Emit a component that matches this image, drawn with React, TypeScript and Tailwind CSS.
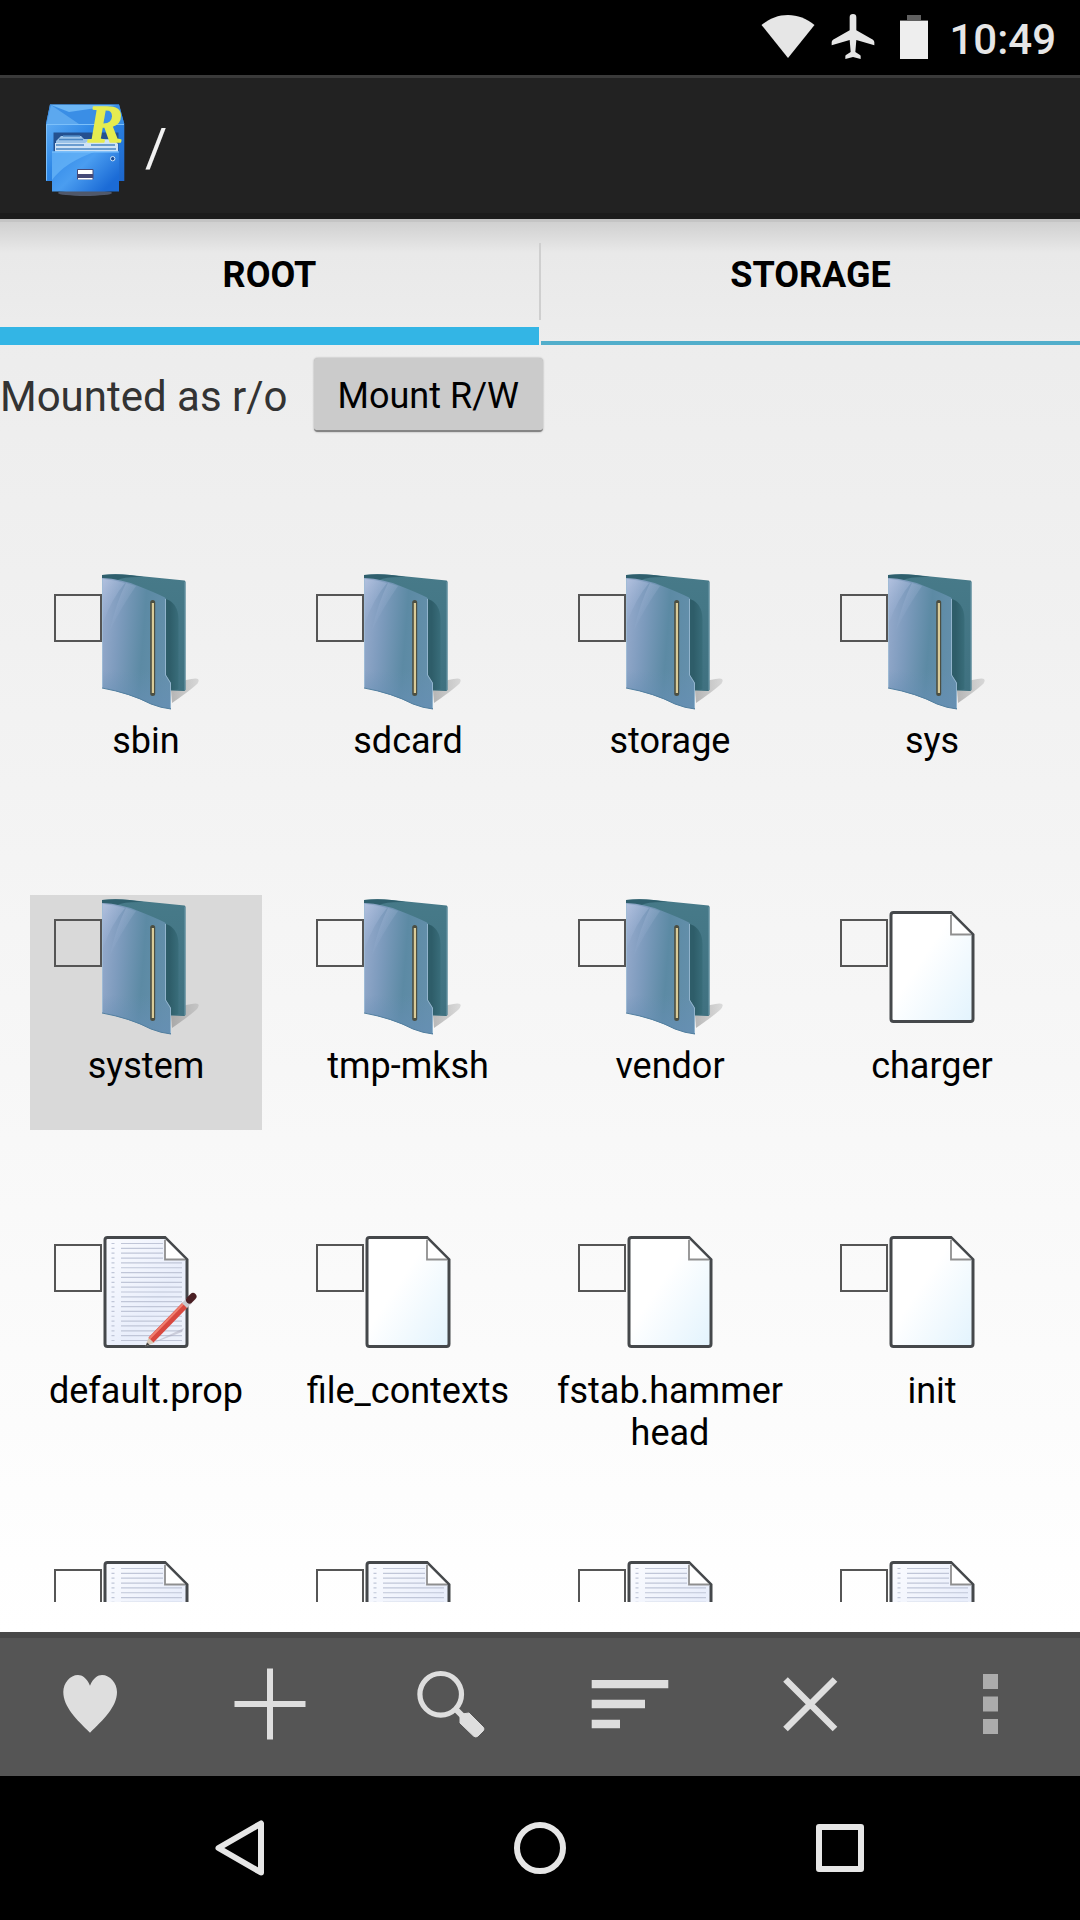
import { useState } from 'react';
import type { ReactNode } from 'react';
import { clsx } from 'clsx';

type Kind = 'folder' | 'file' | 'text' | 'editable';

type Entry = {
  id: number;
  kind: Kind;
  name?: string;
};

const entries: Entry[] = [
  { id: 1, kind: 'folder', name: 'sbin' },
  { id: 2, kind: 'folder', name: 'sdcard' },
  { id: 3, kind: 'folder', name: 'storage' },
  { id: 4, kind: 'folder', name: 'sys' },
  { id: 5, kind: 'folder', name: 'system' },
  { id: 6, kind: 'folder', name: 'tmp-mksh' },
  { id: 7, kind: 'folder', name: 'vendor' },
  { id: 8, kind: 'file', name: 'charger' },
  { id: 9, kind: 'editable', name: 'default.prop' },
  { id: 10, kind: 'file', name: 'file_contexts' },
  { id: 11, kind: 'file', name: 'fstab.hammerhead' },
  { id: 12, kind: 'file', name: 'init' },
  { id: 13, kind: 'text' },
  { id: 14, kind: 'text' },
  { id: 15, kind: 'text' },
  { id: 16, kind: 'text' },
];

const ruledLines = Array.from({ length: 21 }, (_, i) => 23.5 + i * 4.85);

export default function App() {
  return (
    <div className="flex h-screen flex-col overflow-hidden bg-black font-[Roboto,sans-serif] text-black">
      <GradientDefs />
      <StatusBar />
      <TitleBar />
      <main className="flex min-h-0 flex-1 flex-col bg-linear-to-b from-[#ebebeb] to-white">
        <Tabs />
        <MountRow />
        <FileGrid />
      </main>
      <Toolbar />
      <NavigationBar />
    </div>
  );
}

function StatusBar() {
  return (
    <header className="flex h-[75px] shrink-0 items-start justify-end pt-3.5 pr-6 text-[#e6e6e6]">
      <svg className="mr-4 h-[46px] w-[54px]" viewBox="0 0 54 46" fill="currentColor">
        <path d="M27 44 0.5 11C16-2.5 38-2.5 53.5 11z" />
      </svg>
      <svg className="mr-6 h-[46px] w-11" viewBox="272 42 132 138" fill="currentColor">
        <path d="M328 52a10 10 0 0 1 20 0v39l50 28q4 3 4 8v9l-54-16-3 36 14 9q2 1 2 4v8l-23-6-23 6v-8q0-3 2-4l14-9-3-36-54 16v-9q0-5 4-8l50-28z" />
      </svg>
      <svg className="mr-5 h-[46px] w-[30px]" viewBox="0 0 30 46">
        <path d="M8 1h14v5h7v2H1V6h7z" fill="#606060" />
        <path d="M1 7h28v38H1z" fill="#eee" />
      </svg>
      <span className="text-[42px] leading-[52px] font-medium">10:49</span>
    </header>
  );
}

function TitleBar() {
  return (
    <div className="flex h-36 shrink-0 items-center gap-3 border-t-3 border-b-6 border-t-[#3a3a3a] border-b-[#1c1c1c] bg-[#222] pt-1 pl-[37px]">
      <CabinetIcon />
      <h1 className="text-[54px] leading-[64px] text-[#f2f2f2]">/</h1>
    </div>
  );
}

function Tabs() {
  const [active, setActive] = useState('ROOT');

  return (
    <div
      role="tablist"
      className="flex h-[126px] shrink-0 border-t-3 border-[#c4c4c4] bg-linear-to-b from-[#d0d0d0] via-[#e9e9e9] via-25% to-[#ededed]"
    >
      <Tab label="ROOT" active={active === 'ROOT'} onSelect={setActive} />
      <div className="mt-[21px] h-[77px] w-0.5 bg-[#cfcfcf]" />
      <Tab label="STORAGE" active={active === 'STORAGE'} onSelect={setActive} />
    </div>
  );
}

function Tab({
  label,
  active,
  onSelect,
}: {
  label: string;
  active: boolean;
  onSelect: (label: string) => void;
}) {
  return (
    <button
      type="button"
      role="tab"
      aria-selected={active}
      onClick={() => onSelect(label)}
      className="flex flex-1 flex-col justify-between pt-8 text-4xl font-bold"
    >
      <span className="w-full text-center leading-[42px]">{label}</span>
      <span className={clsx('w-full', active ? 'h-[18px] bg-[#33b5e5]' : 'h-1 bg-[#52aecb]')} />
    </button>
  );
}

function MountRow() {
  return (
    <div className="flex shrink-0 items-center gap-[26px] pt-[13px]">
      <span className="pt-1 text-[42px] leading-[50px] text-[#333]">Mounted as r/o</span>
      <button
        type="button"
        className="h-[74px] rounded-sm border-b-2 border-[#858585] bg-[#cbcbcb] px-6 pt-1 text-4xl shadow-[0_0_2px_#999]"
      >
        Mount R/W
      </button>
    </div>
  );
}

function FileGrid() {
  return (
    <ul className="mt-[138px] mb-[30px] grid min-h-0 flex-1 auto-rows-[235px] grid-cols-4 gap-x-[30px] gap-y-[90px] overflow-hidden pr-8 pl-[30px]">
      {entries.map((entry) => (
        <FileCell key={entry.id} entry={entry} highlighted={entry.name === 'system'} />
      ))}
    </ul>
  );
}

function FileCell({ entry, highlighted }: { entry: Entry; highlighted: boolean }) {
  const id = `entry-${entry.id}`;

  return (
    <li className={clsx('flex flex-col gap-1.5', highlighted && 'bg-[#d9d9d9]')}>
      <div className="flex items-start pl-6">
        <input
          id={id}
          type="checkbox"
          aria-label={entry.name ?? 'Text file'}
          className="mt-6 size-12 shrink-0 appearance-none border-2 border-[#555] checked:bg-[#33b5e5]"
        />
        {entry.kind === 'folder' ? <FolderIcon /> : <FileIcon kind={entry.kind} />}
      </div>
      {entry.name && (
        <label htmlFor={id} className="text-center text-4xl leading-[42px] break-all">
          {entry.name}
        </label>
      )}
    </li>
  );
}

function Toolbar() {
  return (
    <div className="grid h-36 shrink-0 grid-cols-6 border-t-6 border-[#484848] bg-[#555] text-[#dedede]">
      <ToolButton label="Bookmarks">
        <path
          d="M48 29.7C45 22 40 19 36 19C28 19 21.3 27 21.3 36C21.3 51 35 64 48 76.7C61 64 75 51 75 36C75 27 68 19 60 19C56 19 51 22 48 29.7z"
          fill="currentColor"
        />
      </ToolButton>
      <ToolButton label="Add">
        <path d="M48 12.5v71M12.5 48h71" stroke="currentColor" strokeWidth="6" />
      </ToolButton>
      <ToolButton label="Search">
        <circle cx="38.7" cy="38.3" r="20.8" fill="none" stroke="currentColor" strokeWidth="5.2" />
        <path d="M53 52.5l9 9" stroke="currentColor" strokeWidth="6" />
        <path
          d="M58 60q0-2 2-2l7-1 14 14q2 2 0 4l-5 5q-2 2-4.500 0L58 67z"
          fill="currentColor"
          stroke="currentColor"
        />
      </ToolButton>
      <ToolButton label="Sort">
        <path d="M9.7 24h76.6v8.300H9.7zM9.7 43.8H63v8.400H9.7zM9.7 63.8H38v8.400H9.7z" fill="currentColor" />
      </ToolButton>
      <ToolButton label="Close">
        <path d="M23.5 23.5l49.500 49.500M73 23.5L23.5 73" stroke="currentColor" strokeWidth="6.5" />
      </ToolButton>
      <ToolButton label="More">
        <path d="M41 18h15v15h-15zM41 40.5h15v15h-15zM41 63h15v15h-15z" fill="#acacac" />
      </ToolButton>
    </div>
  );
}

function ToolButton({ label, children }: { label: string; children: ReactNode }) {
  return (
    <button type="button" aria-label={label} className="flex justify-center pt-[18px]">
      <svg className="size-24" viewBox="0 0 96 96">
        {children}
      </svg>
    </button>
  );
}

function NavigationBar() {
  return (
    <nav className="grid h-36 shrink-0 grid-cols-3 px-[90px] text-[#e6e6e6]">
      <NavButton label="Back">
        <path d="M14.5 36 57 11.5v49z" />
      </NavButton>
      <NavButton label="Home">
        <circle cx="36" cy="36" r="23" />
      </NavButton>
      <NavButton label="Recents">
        <path d="M15 15h42v42H15z" />
      </NavButton>
    </nav>
  );
}

function NavButton({ label, children }: { label: string; children: ReactNode }) {
  return (
    <button type="button" aria-label={label} className="flex items-center justify-center">
      <svg
        className="size-[72px]"
        viewBox="0 0 72 72"
        fill="none"
        stroke="currentColor"
        strokeWidth="6"
        strokeLinejoin="round"
      >
        {children}
      </svg>
    </button>
  );
}

// Shared by every icon, so each gradient is defined only once
function GradientDefs() {
  return (
    <svg className="absolute size-0" aria-hidden="true">
      <defs>
        <linearGradient id="folder-front" x1="0" y1="0.35" x2="1" y2="0.5">
          <stop offset="0" stopColor="#94a9cb" />
          <stop offset="0.25" stopColor="#7d9bbd" />
          <stop offset="0.6" stopColor="#5c8aa4" />
          <stop offset="1" stopColor="#6590ac" />
        </linearGradient>
        <linearGradient id="folder-foot" x1="0" y1="0" x2="0" y2="1">
          <stop offset="0.7" stopColor="#668fb4" stopOpacity="0" />
          <stop offset="1" stopColor="#668fb4" stopOpacity="0.8" />
        </linearGradient>
        <linearGradient id="folder-back" x1="0" y1="0" x2="0" y2="1">
          <stop offset="0" stopColor="#477a89" />
          <stop offset="1" stopColor="#3f7180" />
        </linearGradient>
        <linearGradient id="folder-shade" x1="0" y1="0" x2="1" y2="0">
          <stop offset="0.3" stopColor="#2e5d69" />
          <stop offset="1" stopColor="#396d7a" />
        </linearGradient>
        <linearGradient id="folder-shine" x1="0" y1="0" x2="0.5" y2="1">
          <stop offset="0" stopColor="#c3cfea" stopOpacity="0.6" />
          <stop offset="1" stopColor="#9db4d8" stopOpacity="0" />
        </linearGradient>
        <linearGradient id="folder-shadow" x1="0" y1="0" x2="1" y2="0">
          <stop offset="0" stopColor="#777" stopOpacity="0.5" />
          <stop offset="1" stopColor="#888" stopOpacity="0.25" />
        </linearGradient>
        <linearGradient id="paper" x1="0.1" y1="0.2" x2="1" y2="1">
          <stop offset="0.3" stopColor="#fff" />
          <stop offset="1" stopColor="#e2f3fd" />
        </linearGradient>
        <linearGradient id="paper-ruled" x1="0" y1="0" x2="1" y2="1">
          <stop offset="0" stopColor="#fbfcff" />
          <stop offset="0.6" stopColor="#e9eefb" />
          <stop offset="1" stopColor="#eef2fb" />
        </linearGradient>
        <linearGradient id="cabinet" x1="0" y1="0" x2="1" y2="1">
          <stop offset="0" stopColor="#6fb8f8" />
          <stop offset="0.45" stopColor="#2f88e6" />
          <stop offset="1" stopColor="#1c66cc" />
        </linearGradient>
        <linearGradient id="cabinet-drawer" x1="0" y1="0" x2="1" y2="0.6">
          <stop offset="0" stopColor="#2f87e8" />
          <stop offset="0.5" stopColor="#4a9df0" />
          <stop offset="1" stopColor="#1b6bd6" />
        </linearGradient>
      </defs>
    </svg>
  );
}

function FolderIcon() {
  return (
    <svg className="h-36 w-[104px] shrink-0" viewBox="0 0 104 144">
      <path d="M69 120 84 110q10-2.500 12-1 2 2-2 6-8 7-24 18z" fill="url(#folder-shadow)" />
      <path d="M-0.500 5q14-1.500 28 0l55 5.500q1 0 1 1.500v107.500q0 1.500-2 1.500l-13-.5H40V20L-0.500 8z" fill="url(#folder-back)" />
      <path d="M-0.500 5q14-1.500 28 0l14 2q-20-.5-26 3L-0.500 8z" fill="#2f5f6d" />
      <path d="M64 29q12 4 12.500 20v70q-3 2-12.500 0z" fill="url(#folder-shade)" />
      <path d="M83 12v108" stroke="#6c98a8" strokeWidth="1" />
      <path
        d="M-0.500 8q20 1 35.500 7.500 18 7 28 12l1 1.500v76l5 8v26q-10-1-20-5-20-10-48-16l-1.500-1z"
        fill="url(#folder-front)"
      />
      <path
        d="M-0.500 8q20 1 35.500 7.500 18 7 28 12l1 1.500v76l5 8v26q-10-1-20-5-20-10-48-16l-1.500-1z"
        fill="url(#folder-foot)"
      />
      <path d="M1 9q12 1 22 4-13 15-22 40z" fill="url(#folder-shine)" />
      <path d="M24 13l10 3Q20 36 8 60 14 33 24 13z" fill="url(#folder-shine)" fillOpacity="0.6" />
      <path d="M0.500 9v108M63.500 29v76l5 8v25" fill="none" stroke="#a5c3da" strokeOpacity="0.7" />
      <path d="M0 118q28 5 49 16 10 4 20 5" fill="none" stroke="#527f9f" />
      <rect x="48.200" y="30" width="5" height="96" rx="2.500" fill="#4c4f42" />
      <path d="M50.900 33v90" stroke="#d9cb98" strokeWidth="2.200" />
    </svg>
  );
}

function FileIcon({ kind }: { kind: Kind }) {
  const ruled = kind !== 'file';

  return (
    <svg className="h-36 w-[104px] shrink-0" viewBox="0 0 104 144">
      <path
        d="M5.500 17.500h57.500L85 39.500V124q0 2.500-2.500 2.500h-77q-2.500 0-2.500-2.500V20q0-2.500 2.500-2.500z"
        fill={ruled ? 'url(#paper-ruled)' : 'url(#paper)'}
        stroke="#45484b"
        strokeWidth="3"
      />
      {ruled && (
        <g stroke="#c0c6d8" strokeWidth="1.200">
          {ruledLines.map((y) => (
            <path key={y} d={`M9.5 ${y}h3M19 ${y}h${y < 42 ? 42 : 61}`} />
          ))}
        </g>
      )}
      <path d="M63 19 83.500 39.500H63z" fill="#fff" />
      <path d="M63 20v19.500h20" fill="none" stroke="#8f8f8f" strokeWidth="1.800" />
      {kind === 'editable' && (
        <g>
          <path d="M46 125 82 108 80 112z" fill="#aab" fillOpacity="0.5" />
          <path d="M43.500 126.500l3-9 6 5z" fill="#d9c9b8" />
          <path d="M43.500 126.500l1.500-4 2.500 2z" fill="#444" />
          <path d="M49 120 83 85" stroke="#d8483f" strokeWidth="7" />
          <path d="M47.500 118.500 81.500 83.500" stroke="#f08070" strokeWidth="2" />
          <path d="M82.500 85.500 87.500 80.500" stroke="#c9c9cf" strokeWidth="7" />
          <path d="M87.500 80 91 76.500" stroke="#4a1f24" strokeWidth="7" strokeLinecap="round" />
        </g>
      )}
    </svg>
  );
}

function CabinetIcon() {
  return (
    <svg className="size-24 shrink-0 overflow-visible" viewBox="0 0 96 96">
      <ellipse cx="48" cy="93" rx="27" ry="3" fill="#50586a" />
      <path d="M13 4.500h69l5.300 19.500v57H9V24z" fill="url(#cabinet)" />
      <path d="M13 4.500h69L87.300 24H9z" fill="#3a8ee6" />
      <path d="M14 5h66L32 12z" fill="#6cb6f5" />
      <path d="M14 5 42 24H9.500z" fill="#5ca8ef" />
      <path d="M9.500 24.500v56M9.500 24.500h77.500" stroke="#7cc0fa" fill="none" />
      <path d="M16.500 32.500h65V52h-65z" fill="#24508f" />
      <path d="M19 41l5-5h20l3 3h32v12H19z" fill="#9cc3e8" />
      <path d="M18 43h30l5-3h24l4 4v8H18z" fill="#cfe3f6" />
      <path d="M26 36h17M22 39.500h24M19 45h28M54 45h24M19 49h60" stroke="#4b87c4" strokeWidth="1.500" />
      <path d="M15 51.500h67v40H15z" fill="url(#cabinet-drawer)" />
      <path d="M15 51.500h44Q28 62 15 80z" fill="#67b4f7" fillOpacity="0.75" />
      <path d="M15 52h67" stroke="#7fc4ff" />
      <rect x="40" y="69" width="16.500" height="10.500" rx="1" fill="#454a78" />
      <path d="M41 70h14.500v4H41zM41 78h14.500v1.500H41z" fill="#fff" />
      <circle cx="75.700" cy="58.700" r="2.200" fill="#1c4d96" stroke="#cde5fb" />
      <text
        x="51"
        y="42"
        fontFamily="Liberation Serif, serif"
        fontSize="52"
        fontStyle="italic"
        fontWeight="700"
        fill="#e6ec50"
        stroke="#e6ec50"
        strokeWidth="1.500"
        strokeLinejoin="round"
      >
        R
      </text>
    </svg>
  );
}
